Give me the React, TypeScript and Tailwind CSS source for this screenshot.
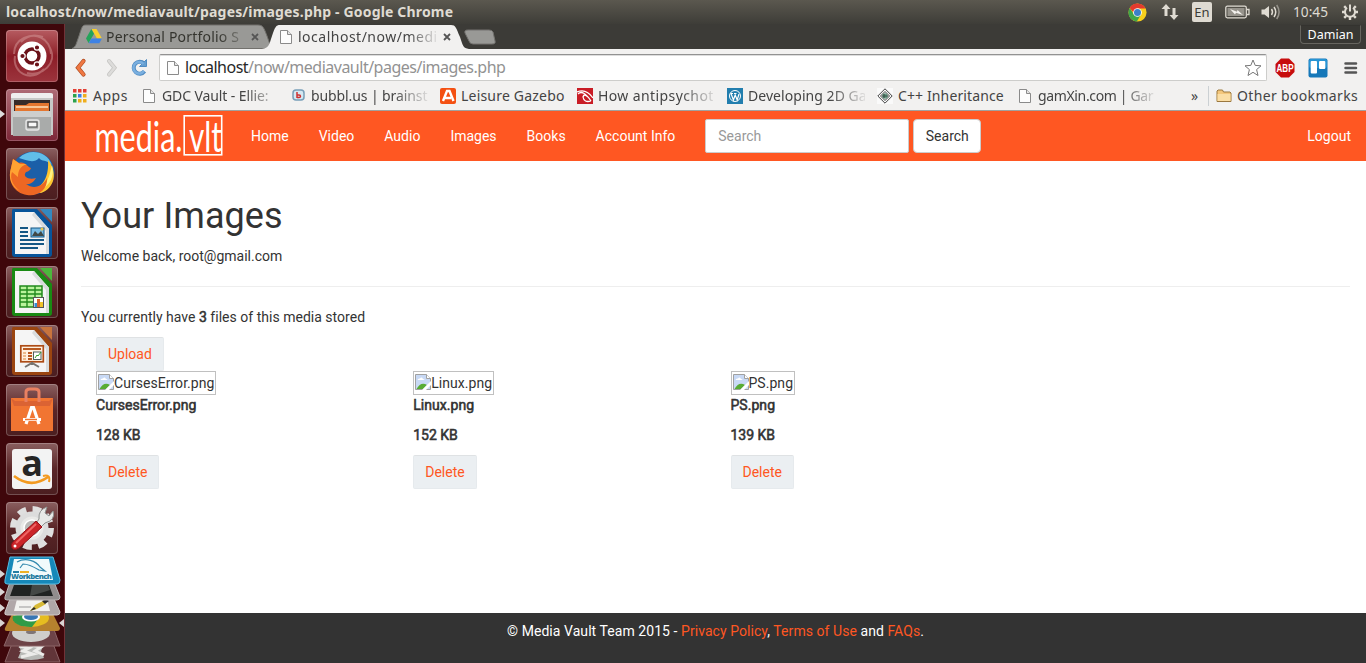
import type { ReactNode } from 'react';

const UI = "font-['Noto_Sans','Open_Sans',sans-serif]";

function PageIcon() {
  return (
    <svg width="16" height="16" viewBox="0 0 16 16" className="block shrink-0">
      <path d="M2.5 1.5H9.5L13.5 5.5V14.5H2.5Z" fill="#fdfdfd" stroke="#8a8a8a" />
      <path d="M9.5 1.5V5.5H13.5" fill="#e4e4e4" stroke="#8a8a8a" />
    </svg>
  );
}

function ChromeIcon() {
  return (
    <svg width="19" height="19" viewBox="0 0 20 20" className="block">
      <circle cx="10" cy="10" r="9.5" fill="#f6cf1c" />
      <path d="M1.8 5.2L6.4 12.2L13.4 12.5L9.3 19.5A9.5 9.5 0 0 1 1.8 5.2Z" fill="#3fa64a" />
      <path d="M1.8 5.2A9.5 9.5 0 0 1 18.5 5.8H10L5.8 10Z" fill="#e23a2e" />
      <circle cx="10" cy="10" r="4.6" fill="#fff" />
      <circle cx="10" cy="10" r="3.7" fill="#3a80ca" />
    </svg>
  );
}

function TopBar() {
  return (
    <header className="flex h-6 items-center bg-gradient-to-b from-[#5b584f] to-[#3e3d38] pl-[6px] pr-[7px] text-[#dfdbd2]">
      <div className="grow whitespace-nowrap pb-px text-[14px] font-bold tracking-[0.17px]">
        localhost/now/mediavault/pages/images.php - Google Chrome
      </div>
      <div className="flex w-[33px]"><ChromeIcon /></div>
      <svg width="18" height="18" viewBox="0 0 18 18" className="mr-[13px] block" fill="#dfdbd2">
        <path d="M5 1L9.5 6H6.5V13H3.5V6H0.5Z" />
        <path d="M13 17L8.5 12H11.5V5H14.5V12H17.5Z" />
      </svg>
      <div className="mr-[13px] flex h-5 w-5 items-center justify-center rounded-[2px] bg-[#dfdbd2] text-[13px] leading-5 text-[#3c3b37]">En</div>
      <svg width="25" height="14" viewBox="0 0 25 14" className="mr-[11px] block">
        <rect x="0.8" y="1.2" width="20.5" height="11.6" rx="1.5" fill="none" stroke="#dfdbd2" strokeWidth="1.3" />
        <rect x="2.5" y="3" width="17" height="8" fill="#96938b" />
        <path d="M22 4.5H24V9.5H22" fill="none" stroke="#dfdbd2" strokeWidth="1.3" />
        <path d="M5 4L12 6.8L12.5 5L18 10L11 7.7L10 9.5Z" fill="#f4f2ee" />
      </svg>
      <svg width="20" height="18" viewBox="0 0 20 18" className="mr-[12px] block">
        <path d="M0.5 6.5H3.5L8 3V15L3.5 11.5H0.5Z" fill="#dfdbd2" />
        <path d="M10.5 6Q12.5 9 10.5 12M13 4Q16.5 9 13 14" fill="none" stroke="#dfdbd2" strokeWidth="1.5" />
        <path d="M15.7 2Q20.5 9 15.7 16" fill="none" stroke="#96938b" strokeWidth="1.5" />
      </svg>
      <div className="w-[48px] whitespace-nowrap text-[13.7px]">10:45</div>
      <svg width="18" height="18" viewBox="0 0 18 18" className="block" fill="none" stroke="#dfdbd2">
        <path d="M6 4.8A5 5 0 1 0 12 4.8" strokeWidth="2" />
        <path d="M9 1.5V8.5" strokeWidth="2" />
        <path d="M3.2 3.2L5 5M14.8 3.2L13 5M1 9H4M14 9H17M3.2 14.8L5.2 12.8M14.8 14.8L12.8 12.8M9 14V17" strokeWidth="2.4" />
      </svg>
    </header>
  );
}

function Tile({ className, children }: { className: string; children: ReactNode }) {
  return (
    <div className={`relative ml-[6px] h-[52px] w-[52px] overflow-hidden rounded-[4px] shadow-[inset_0_0_0_1px_rgba(255,255,255,0.22)] ${className}`}>
      <svg width="52" height="52" viewBox="0 0 52 52" className="block">{children}</svg>
    </div>
  );
}

const DARK = 'bg-gradient-to-b from-[#8a5f60] via-[#5a2527] to-[#4b1e20]';

function DocShape({ main, light }: { main: string; light: string }) {
  return (
    <>
      <path d="M7 2H31L46 18V47Q46 50 43 50H9Q6 50 6 47V4Q6 2 7 2Z" fill={main} />
      <path d="M9 5H28L43 22V47H9Z" fill="#f5f5f5" />
      <path d="M28 5L43 22V47H40V24L26 8Z" fill="#d9dcdd" />
      <path d="M34 2H46V15Z" fill={light} />
    </>
  );
}

function Launcher() {
  return (
    <aside className="relative flex w-[65px] shrink-0 flex-col gap-[7px] border-r border-[#713137] bg-[#3f070b] pt-[6px]">
      <Tile className="bg-gradient-to-b from-[#b65b61] via-[#8c1c27] to-[#9c343d]">
        <path d="M8 24C8 8 25 3 37 7M15 12C28 -1 45 9 45 24M44 18C52 33 36 47 21 43M38 39C25 53 6 43 9 26" fill="none" stroke="#d69999" strokeOpacity="0.5" strokeWidth="2" />
        <circle cx="26" cy="26" r="14.5" fill="#fff" />
        <circle cx="26" cy="26" r="7" fill="none" stroke="#6b1219" strokeWidth="3.4" />
        <g fill="#6b1219" stroke="#fff" strokeWidth="1.2">
          <circle cx="16.5" cy="26" r="2.7" /><circle cx="31" cy="17.5" r="2.7" /><circle cx="31" cy="34.5" r="2.7" />
        </g>
      </Tile>
      <Tile className="bg-gradient-to-b from-[#ae6b76] to-[#7c2638]">
        <path d="M5 6Q5 4 8 4H44Q47 4 47 6V46H5Z" fill="#c7c8c7" />
        <path d="M5 6Q5 4 8 4H44Q47 4 47 6V9H5Z" fill="#efefef" />
        <rect x="8" y="11" width="36" height="12" fill="#362b29" />
        <path d="M9 16H20L23 14H43V23H9Z" fill="#e4762f" />
        <path d="M10 18H42" stroke="#ffe0ba" strokeWidth="1.5" />
        <path d="M7 22H45V47H7Z" fill="#a9abaa" />
        <path d="M7 22H45V28H7Z" fill="#cdcecd" />
        <rect x="20" y="31" width="13" height="10" rx="2" fill="#b9bbba" stroke="#e6e6e6" strokeWidth="1.4" />
        <rect x="22" y="33" width="9" height="5" fill="#f8f8f8" stroke="#555" strokeWidth="1.2" />
      </Tile>
      <Tile className={DARK}>
        <circle cx="27" cy="25" r="21.5" fill="#1b5fa8" />
        <path d="M13 10C23 0 41 3 46 17C40 11 36 14 33 10C28 16 20 12 13 10Z" fill="#61bee9" />
        <path d="M42 12C52 24 49 40 35 45L24 43C38 39 43 28 42 12Z" fill="#ffc52e" />
        <path d="M46 17C49 28 44 37 36 41C43 32 44 25 46 17Z" fill="#fff181" />
        <path d="M7 11L13 15C19 13 21 19 25 20Q24 23 20 24C16 29 23 32 30 30Q26 37 20 36C28 42 37 38 41 30C42 42 31 49 21 47C8 45 1 33 5 20Z" fill="#ed6723" />
        <path d="M7 11L14 16L21 16C14 18 12 23 12 29L6 24C3 31 8 39 14 43C5 39 2 29 5 20Z" fill="#ffa232" />
      </Tile>
      <Tile className={DARK}>
        <DocShape main="#07549a" light="#3489c0" />
        <path d="M14 21H22M14 25H22M14 29H22M14 33H38M14 37H38M14 41H32" stroke="#155784" strokeWidth="2" />
        <rect x="25" y="21" width="13" height="9" fill="#79bce5" stroke="#155784" />
        <path d="M26 29L29 24L32 27L35 24L38 29Z" fill="#414946" /><circle cx="36" cy="22" r="1.5" fill="#edc54b" />
      </Tile>
      <Tile className={DARK}>
        <DocShape main="#198a13" light="#4cb73c" />
        <rect x="14" y="20" width="22" height="21" fill="#baf39c" stroke="#228a1c" strokeWidth="1.5" />
        <path d="M14 24H36M14 28H36M14 32H36M14 36H36M21 20V41M29 20V41" stroke="#228a1c" strokeWidth="1.4" />
        <rect x="27.5" y="31.5" width="10" height="10" fill="#fff" stroke="#555" />
        <rect x="28.5" y="37" width="2.5" height="4" fill="#368bd3" /><rect x="31" y="33" width="3" height="8" fill="#dc632a" /><rect x="34" y="36" width="3" height="5" fill="#efc329" />
      </Tile>
      <Tile className={DARK}>
        <DocShape main="#9b4510" light="#c8743d" />
        <rect x="14.8" y="20.8" width="22.5" height="16" fill="#fff1df" stroke="#ad4c16" strokeWidth="1.7" />
        <path d="M17 24H35M22 28H26M22 31H26M22 34H26" stroke="#b85920" strokeWidth="2" />
        <path d="M17 28H20M17 31H20M17 34H20" stroke="#e6a86f" strokeWidth="1.5" />
        <rect x="27.5" y="27" width="7.5" height="7.5" fill="#fff" stroke="#4e6160" /><path d="M29 33L31 30L32 31L35 27" stroke="#36a12a" fill="none" />
        <path d="M19 42L26 38L33 42M26 37V40" fill="none" stroke="#77736f" strokeWidth="2" />
      </Tile>
      <Tile className={DARK}>
        <path d="M5 14H47V47H5Z" fill="#f17532" /><path d="M5 14L9 17H43L47 14L44 22H8Z" fill="#db6333" />
        <path d="M20 18V8Q20 5 24 5H29Q33 5 33 8V18" fill="none" stroke="#e98061" strokeWidth="3" />
        <path d="M20 40L25.5 23.5H27.5L33 40M17 35.5H35" fill="none" stroke="#fff" strokeWidth="3.2" />
        <path d="M19 35.5H31" stroke="#f17532" strokeWidth="1.3" />
      </Tile>
      <Tile className={DARK}>
        <rect x="6" y="6" width="40" height="40" rx="3" fill="#f3f3f3" />
        <text x="26" y="33" textAnchor="middle" fill="#252525" fontFamily="Open Sans, sans-serif" fontSize="36" fontWeight="700">a</text>
        <path d="M8 33Q25 46 42 34" fill="none" stroke="#f39a20" strokeWidth="2.7" /><path d="M37 33Q45 31 43 39" fill="none" stroke="#f39a20" strokeWidth="2" />
      </Tile>
      <Tile className={DARK}>
        <circle cx="26" cy="26" r="18" fill="none" stroke="#dfdfdf" strokeWidth="8" strokeDasharray="8 6.14" />
        <circle cx="26" cy="26" r="14" fill="#e9e9e7" stroke="#dcdcdc" strokeWidth="5" />
        <circle cx="26" cy="26" r="8" fill="#bbbab8" stroke="#fff" strokeWidth="1.5" />
        <path d="M29 23L33 17Q32 8 41 5L39 11L43 14L47 9Q50 18 39 21L33 27Z" fill="#e8e9e7" stroke="#8f9291" />
        <path d="M30 19L36 25L13 46Q8 49 6 46Q4 43 7 40Z" fill="#cb2529" stroke="#941218" />
        <path d="M30 22L10 41" stroke="#ef6463" strokeWidth="2" /><circle cx="9" cy="44" r="1.5" fill="#fff" />
      </Tile>
      <svg width="64" height="107" viewBox="0 3 64 107" className="mt-[-5px] block shrink-0">
        <path d="M13 88H52L60 109H5Z" fill="#613539" stroke="#8c6467" />
        <path d="M18 91Q31 87 44 91L41 98L44 105Q31 109 18 105L21 98Z" fill="#b8bab7" />
        <path d="M19 93L29 95L23 98L33 101L21 104M30 92L41 94L35 98L44 102" stroke="#ececea" strokeWidth="3" fill="none" />
        <path d="M12 74H53L60 93H4Z" fill="#6d4347" stroke="#8c6467" />
        <ellipse cx="31" cy="80" rx="19" ry="9" fill="#cfcfcc" /><ellipse cx="31" cy="79" rx="5" ry="2" fill="#7f7677" />
        <path d="M12 61H53L60 75Q60 78 57 78H7Q4 78 5 75Z" fill="#b6812e" />
        <ellipse cx="31" cy="65" rx="18" ry="9" fill="#e6bd20" />
        <path d="M13 63A18 9 0 0 0 32 74L38 66L22 61Z" fill="#309b47" />
        <ellipse cx="31" cy="64" rx="9" ry="4.5" fill="#fff" /><ellipse cx="31" cy="63.5" rx="7" ry="3.6" fill="#3877b4" />
        <path d="M10 46H54L60 59Q60 62 57 62H7Q4 62 5 59Z" fill="#b0a7a8" stroke="#d0c9c9" />
        <path d="M17 46H47L50 58H14Z" fill="#f2f2ef" /><path d="M19 54H31" stroke="#999" /><path d="M30 58L35 52L43 48L46 51L37 56Z" fill="#d7ba36" /><path d="M30 58L34 54L36 56ZM42 48L46 46L49 48L45 51Z" fill="#292a29" />
        <path d="M10 29H54L60 44Q60 47 57 47H7Q4 47 5 44Z" fill="#918d8d" stroke="#bab5b5" />
        <path d="M14 32H49L53 43H10Z" fill="#202322" /><path d="M32 32H48L50 37Q37 41 30 43Z" fill="#444846" />
        <path d="M10 4H53L60 27Q60 31 57 31H7Q4 31 5 27Z" fill="#1688b9" stroke="#55bce2" />
        <path d="M14 6H49L53 27H10Z" fill="#f1fafb" />
        <path d="M17 9C26 4 36 8 40 14L45 18L39 17C34 14 29 11 23 11L20 15" fill="none" stroke="#3289ae" strokeWidth="1.2" />
        <text x="31.5" y="26" textAnchor="middle" fill="#267ca0" fontFamily="Open Sans, sans-serif" fontSize="7.7" fontWeight="800" textLength="41">Workbench</text>
        <path d="M13 19H19" stroke="#247da4" strokeWidth="2" /><path d="M20 19H29" stroke="#eeb126" strokeWidth="2" />
        <path d="M0 17L5 21L0 25ZM0 35L5 39L0 43ZM0 51L5 55L0 59ZM0 66L5 70L0 74ZM64 66L59 70L64 74Z" fill="#d9d4d3" />
      </svg>
      <svg width="5" height="8" viewBox="0 0 5 8" className="absolute left-0 top-[86px]"><path d="M0 0L5 4L0 8Z" fill="#ddd" /></svg>
    </aside>
  );
}

function CloseMark() {
  return <svg width="8" height="8" viewBox="0 0 8 8"><path d="M1 1L7 7M7 1L1 7" stroke="#555" strokeWidth="1.8" /></svg>;
}

function TabStrip() {
  return (
    <div className="flex h-[25px] justify-between bg-[#3c3b37]">
      <div className="relative flex h-[25px] w-[440px] items-center">
        <svg width="440" height="25" viewBox="0 0 440 25" className="absolute inset-0">
          <path d="M7 24.5C11 23 11 20 14 12C17 3 17 1 21 1H193C198 1 199 4 202 12C205 20 205 24 210 24.5Z" fill="#999996" stroke="#72716d" />
          <path d="M197 25C204 24 204 21 207 12C210 3 211 1 215 1H386C391 1 391 4 395 13C398 22 398 24 404 25Z" fill="#f2f1f0" />
          <path d="M403 6H424Q427 6 428 8L430 17Q431 20 427 20H408Q405 20 404 17L400 9Q399 6 403 6Z" fill="#999996" stroke="#747370" />
        </svg>
        <div className="relative flex items-center pl-[21px]">
          <svg width="16" height="15" viewBox="0 0 16 15"><path d="M5.5 0H10.5L16 9.5H11Z" fill="#fbcf2c" /><path d="M5.3 0L8 4.8L2.6 14L0 9.5Z" fill="#24a45a" /><path d="M5.4 9.5H16L13.3 14.2H2.7Z" fill="#3e82e5" /></svg>
          <div className="ml-[4px] w-[138px] whitespace-nowrap text-[14px] tracking-[0.2px] text-[#34342e] [mask-image:linear-gradient(to_right,black_112px,transparent_145px)]">Personal Portfolio S</div>
          <div className="ml-[7px]"><CloseMark /></div>
          <div className="ml-[19px]"><PageIcon /></div>
          <div className="ml-[4px] w-[138px] whitespace-nowrap text-[14px] tracking-[0.5px] text-[#444] [mask-image:linear-gradient(to_right,black_110px,transparent_142px)]">localhost/now/medi</div>
          <div className="ml-[7px]"><CloseMark /></div>
        </div>
      </div>
      <div className="mr-[5px] mt-[1px] flex h-[19px] w-[61px] items-center justify-center rounded-b-[4px] border border-[#67655f] border-t-[#34332f] bg-[#383733] text-[12.5px] leading-4 text-white">Damian</div>
    </div>
  );
}

function Toolbar() {
  return (
    <div className="flex h-9 items-center bg-[#f2f1f0] pt-px">
      <svg width="94" height="24" viewBox="0 0 94 24" className="block shrink-0">
        <path d="M18.5 5L13 11.8L18.5 18.5" fill="none" stroke="#ad491e" strokeWidth="4.2" strokeLinecap="round" />
        <path d="M18.5 5L13 11.8L18.5 18.5" fill="none" stroke="#ef7843" strokeWidth="2.8" strokeLinecap="round" />
        <path d="M44 5L49.5 11.8L44 18.5" fill="none" stroke="#c4c3c1" strokeWidth="4" strokeLinecap="round" />
        <path d="M44 5L49.5 11.8L44 18.5" fill="none" stroke="#dddcda" strokeWidth="2.6" strokeLinecap="round" />
        <path d="M79 7.5A6 6 0 1 0 79.5 15.3" fill="none" stroke="#518cc2" strokeWidth="4" />
        <path d="M74.5 10.5H81.5V3.5Z" fill="#669fd0" stroke="#518cc2" />
        <path d="M78.5 7.8A5.8 5.8 0 1 0 79 15" fill="none" stroke="#7aafdf" strokeWidth="2.5" />
      </svg>
      <div className="flex h-[27px] w-[1108px] items-center rounded-[2px] border border-[#cdcdcb] border-t-[#929292] bg-white pl-[5px] pr-[4px] shadow-[inset_0_1px_0_#ddd]">
        <PageIcon />
        <div className="ml-[4px] grow whitespace-nowrap pb-px text-[16px] tracking-[-0.5px] text-[#929292]"><span className="text-[#282828]">localhost</span>/now/mediavault/pages/images.php</div>
        <svg width="18" height="18" viewBox="0 0 18 18"><path d="M9 1L11.2 6.4L17 6.8L12.6 10.6L14 16.5L9 13.3L4 16.5L5.4 10.6L1 6.8L6.8 6.4Z" fill="#fff" stroke="#777" /></svg>
      </div>
      <svg width="20" height="20" viewBox="0 0 20 20" className="ml-[8px]"><path d="M6 0.5H14L19.5 6V14L14 19.5H6L0.5 14V6Z" fill="#c70d0d" /><text x="10" y="13.7" fontFamily="Liberation Sans, sans-serif" fontSize="10.5" fontWeight="700" textAnchor="middle" textLength="17" lengthAdjust="spacingAndGlyphs" fill="#fff">ABP</text></svg>
      <svg width="20" height="20" viewBox="0 0 20 20" className="ml-[13px]"><rect x="0.5" y="0.5" width="19" height="19" rx="2" fill="#1678b9" /><rect x="1" y="1" width="18" height="9" rx="2" fill="#2694d4" /><rect x="2.7" y="3" width="6.3" height="12.5" rx="1" fill="#fff" /><rect x="11" y="3" width="6.3" height="8" rx="1" fill="#fff" /></svg>
      <svg width="14" height="14" viewBox="0 0 14 14" className="ml-[16px]"><path d="M1.5 2.5H12M1.5 7H12M1.5 11.5H12" stroke="#555" strokeWidth="2.5" strokeLinecap="round" /></svg>
    </div>
  );
}

function Bookmark({ icon, width, fade, tracking, children }: { icon: ReactNode; width: string; fade?: boolean; tracking: string; children: ReactNode }) {
  return (
    <div className={`flex shrink-0 items-center gap-[5px] ${width}`}>
      <div className="flex w-4 shrink-0 justify-center">{icon}</div>
      <div className={`whitespace-nowrap ${tracking} ${fade ? 'w-[117px] [mask-image:linear-gradient(to_right,black_82px,transparent_121px)]' : ''}`}>{children}</div>
    </div>
  );
}

function Bookmarks() {
  const dots = ['#e33e33', '#e33e33', '#e33e33', '#2ba24c', '#3b7ee4', '#efae1c', '#2ba24c', '#efae1c', '#efae1c'];
  return (
    <div className="flex h-[26px] items-center border-b border-[#a2a19e] bg-[#f2f1f0] pb-[4px] pl-[7px] text-[14px] text-[#444]">
      <Bookmark width="w-[69px]" tracking="tracking-[0.5px]" icon={<svg width="14" height="14" viewBox="0 0 14 14">{dots.map((c, i) => <rect key={i} x={(i % 3) * 5} y={Math.floor(i / 3) * 5} width="3.5" height="3.5" fill={c} />)}</svg>}>Apps</Bookmark>
      <Bookmark width="w-[149px]" tracking="tracking-[-0.1px]" fade icon={<PageIcon />}>GDC Vault - Ellie:</Bookmark>
      <Bookmark width="w-[150px]" tracking="tracking-[-0.1px]" fade icon={<svg width="13" height="13" viewBox="0 0 13 13"><rect x="1" y="1" width="11" height="10" rx="3" fill="#d4e8f2" stroke="#789eb8" strokeWidth="1.5" /><path d="M5 3V9M5 6H7Q8.5 6 8.5 7.3T7 8.6H5" fill="none" stroke="#ce3030" strokeWidth="1.5" /></svg>}>bubbl.us | brainst</Bookmark>
      <Bookmark width="w-[137px]" tracking="tracking-[0.2px]" icon={<svg width="16" height="16" viewBox="0 0 16 16"><rect width="16" height="16" rx="2" fill="#f45012" /><path d="M3 13L7 3H9.5L13.5 13M5 10H11" fill="none" stroke="#fff" strokeWidth="2.4" /></svg>}>Leisure Gazebo</Bookmark>
      <Bookmark width="w-[150px]" tracking="tracking-[0.4px]" fade icon={<svg width="16" height="16" viewBox="0 0 16 16"><rect width="16" height="16" fill="#c91c25" /><path d="M0 4Q9 0 16 10M1 6Q6 1 14 13M14 13Q7 15 6 9Q7 5 11 9" fill="none" stroke="#fff" strokeWidth="1.3" /></svg>}>How antipsychot</Bookmark>
      <Bookmark width="w-[150px]" tracking="tracking-[0.05px]" fade icon={<svg width="16" height="16" viewBox="0 0 16 16"><rect width="16" height="16" fill="#227eae" /><circle cx="8" cy="8" r="5.5" fill="none" stroke="#fff" /><path d="M4 5.5L6.4 12L8.2 7L10.2 12L12 6M3.5 5.5H6M7 5.5H9.5" fill="none" stroke="#fff" strokeWidth="1.2" /></svg>}>Developing 2D Ga</Bookmark>
      <Bookmark width="w-[140px]" tracking="tracking-[0.12px]" icon={<svg width="16" height="16" viewBox="0 0 16 16"><rect width="16" height="16" fill="#fafafa" /><path d="M8 0.8L15.2 8L8 15.2L0.8 8ZM8 3.5L12.5 8L8 12.5L3.5 8Z" fill="none" stroke="#414141" /><circle cx="8" cy="8" r="2.7" fill="#689983" /><path d="M5 8H11M7 6V10" stroke="#354e44" /></svg>}>C++ Inheritance</Bookmark>
      <Bookmark width="w-[174px]" tracking="tracking-[-0.35px]" fade icon={<PageIcon />}>gamXin.com | Gar</Bookmark>
      <span className="w-[17px] text-[14px]">»</span>
      <div className="mr-[7px] h-5 w-px bg-[#cbd0d3]" />
      <Bookmark width="w-[143px]" tracking="tracking-[0.34px]" icon={<svg width="16" height="14" viewBox="0 0 16 14"><path d="M1 12.5V2L2 1H6.5L7.5 3H14L15 4V12.5Z" fill="#f4c77c" stroke="#9b783f" /><path d="M1.5 5H14.5V12H1.5Z" fill="#fbdea5" /></svg>}>Other bookmarks</Bookmark>
    </div>
  );
}

function BrokenIcon() {
  return (
    <svg width="16" height="16" viewBox="0 0 16 16" className="mt-px block shrink-0">
      <path d="M0.5 0.5H11.5L15.5 4.5V15.5H0.5Z" fill="#c8d9f5" stroke="#a1a1a1" />
      <path d="M11.5 0.5V4.5H15.5" fill="#fff" stroke="#a1a1a1" />
      <path d="M2.5 6Q3 4 5 4.5Q6.5 2.5 8 5Q9.5 5 9.5 6Z" fill="#fff" />
      <path d="M1.5 15Q6 7 12 11L8 15Z" fill="#58ac35" />
      <path d="M16 7L7 16H11L16 11Z" fill="#fff" />
    </svg>
  );
}

const action = 'flex h-[34px] w-fit items-center rounded-[2px] border border-[#e6eaed] border-t-[#dfe2e4] bg-[#ebeff2] px-[11px] text-[#ff5722]';
const files = [['CursesError.png', '128 KB'], ['Linux.png', '152 KB'], ['PS.png', '139 KB']];

export default function App() {
  return (
    <div className={`flex h-[663px] w-[1366px] flex-col overflow-hidden ${UI}`}>
      <TopBar />
      <div className="flex min-h-0 grow">
        <Launcher />
        <div className="flex w-[1301px] flex-col bg-white">
          <TabStrip />
          <Toolbar />
          <Bookmarks />
          <div className="flex grow flex-col font-[Roboto,sans-serif] text-[14px] leading-5 text-[#333]">
            <nav className="flex h-[50px] items-center bg-[#ff5722] text-white">
              <svg width="171" height="50" viewBox="0 0 171 50" className="shrink-0" fill="#fff">
                <text x="29.5" y="40.5" fontFamily="Lato, sans-serif" fontSize="43" textLength="88" lengthAdjust="spacingAndGlyphs">media.</text>
                <rect x="119.2" y="4.8" width="37.5" height="39" fill="none" stroke="#fff" strokeWidth="1.6" />
                <text x="124" y="40.5" fontFamily="Lato, sans-serif" fontSize="42" textLength="33" lengthAdjust="spacingAndGlyphs">vlt</text>
              </svg>
              <div className="flex">
                {['Home', 'Video', 'Audio', 'Images', 'Books', 'Account Info'].map((item) => <a key={item} className="whitespace-nowrap px-[15px]">{item}</a>)}
              </div>
              <div className="ml-[15px] flex h-[34px] w-[204px] items-center rounded-[2px] border border-[#ccc] bg-white px-3 text-[#999]">Search</div>
              <div className="ml-1 flex h-[34px] items-center rounded-[4px] border border-[#ccc] bg-white px-[11.5px] text-[#333]">Search</div>
              <a className="ml-auto pr-[15px]">Logout</a>
            </nav>
            <main className="grow px-4 pt-[35px]">
              <h1 className="text-[36px] leading-10 tracking-[0.08px]">Your Images</h1>
              <p className="mt-[10px]">Welcome back, root@gmail.com</p>
              <hr className="mt-5 border-[#eee]" />
              <p className="mt-5 tracking-[0.02px]">You currently have <span className="[-webkit-text-stroke:0.55px_#333]">3</span> files of this media stored</p>
              <div className="px-[15px] pt-[10px]">
                <div className={action}>Upload</div>
                <div className="flex">
                  {files.map(([name, size]) => (
                    <article key={name} className="w-[317.25px]">
                      <div className="flex h-6 w-fit border border-[#c0c0c0] px-px pt-px tracking-[0.04px]"><BrokenIcon />{name}</div>
                      <p className="tracking-[0.04px] [-webkit-text-stroke:0.55px_#333]">{name}</p>
                      <p className="my-[10px] [-webkit-text-stroke:0.55px_#333]">{size}</p>
                      <div className={action}>Delete</div>
                    </article>
                  ))}
                </div>
              </div>
            </main>
            <footer className="h-[50px] bg-[#333] pt-2 text-center tracking-[0.06px] text-white">
              © Media Vault Team 2015 - <span className="text-[#ff5722]">Privacy Policy</span>, <span className="text-[#ff5722]">Terms of Use</span> and <span className="text-[#ff5722]">FAQs</span>.
            </footer>
          </div>
        </div>
      </div>
    </div>
  );
}
